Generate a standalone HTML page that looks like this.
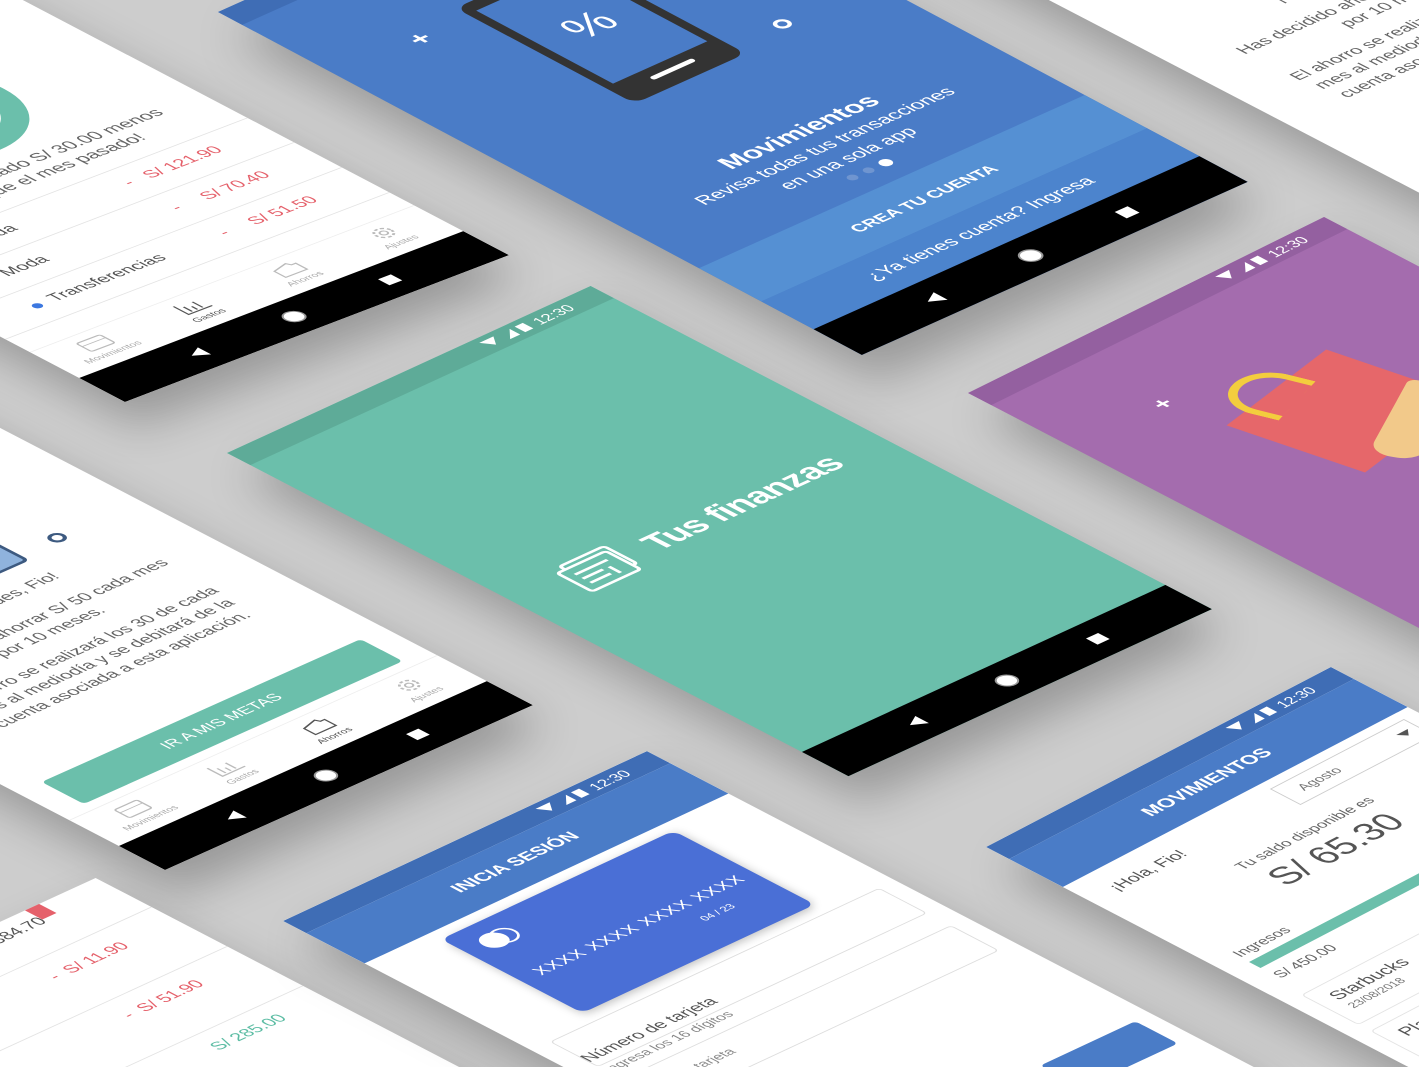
<!DOCTYPE html>
<html><head><meta charset="utf-8">
<style>
*{margin:0;padding:0;box-sizing:border-box}
html,body{width:1419px;height:1067px;overflow:hidden;background:#cdcdcd;font-family:"Liberation Sans",sans-serif}
#wrap{position:relative;width:1419px;height:1067px;overflow:hidden;background:#cdcdcd}
.ph{position:absolute;left:0;top:0;width:360px;height:640px;transform-origin:0 0;overflow:hidden;background:#fff;box-shadow:-16px 32px 40px rgba(0,0,0,.26)}
.ab{position:absolute}
.sb{position:absolute;left:0;top:0;width:360px;height:24px}
.sb svg{position:absolute;right:8px;top:4px}
.nav{position:absolute;left:0;top:592px;width:360px;height:48px;background:#000}
.nav svg{position:absolute;left:0;top:0}
.c{text-align:center;width:360px;left:0}
.tab{position:absolute;top:548px;width:90px;text-align:center;font-size:9px;color:#aaa}
.row{position:absolute;left:0;width:360px;height:50px;border-bottom:1px solid #e3e3e3}
.red{color:#e5616b}
</style></head><body><div id="wrap">

<!-- top-right savings phone (partial) -->
<div class="ph" style="transform:matrix(1.022,-0.458,0.961,0.5,895,-80)">
  <div class="ab c" style="top:262px;font-size:16px;color:#666">¡Felicidades, Fio!</div>
  <div class="ab c" style="top:298px;font-size:16px;color:#666;line-height:21px">Has decidido ahorrar S/ 50 cada mes<br>por 10 meses.</div>
  <div class="ab c" style="top:352px;font-size:16px;color:#666;line-height:21px">El ahorro se realizará los 30 de cada<br>mes al mediodía y se debitará de la<br>cuenta asociada a esta aplicación.</div>
  <div class="nav"></div>
</div>

<!-- top-left spending phone -->
<div class="ph" style="transform:matrix(1.067,-0.408,0.953,0.5,-485,82)">
  <div class="sb" style="background:#3f6db5"></div>
  <div class="ab" style="left:0;top:24px;width:360px;height:56px;background:#4a7cc7"></div>
  <svg class="ab" style="left:115px;top:150px" width="150" height="150"><circle cx="75" cy="75" r="58" fill="none" stroke="#6bbfab" stroke-width="20"/><circle cx="75" cy="75" r="58" fill="none" stroke="#e5616b" stroke-width="20" stroke-dasharray="90 400" transform="rotate(-150 75 75)"/><circle cx="75" cy="75" r="58" fill="none" stroke="#4a7cc7" stroke-width="20" stroke-dasharray="50 400" transform="rotate(-200 75 75)"/></svg>
  <div class="ab" style="left:30px;top:308px;width:360px;text-align:center;font-size:17px;color:#666;line-height:21px">Has gastado S/ 30.00 menos<br>que el mes pasado!</div>
  <div class="row" style="top:365px;border-top:1px solid #e3e3e3"></div>
  <div class="row" style="top:415px"></div>
  <div class="row" style="top:465px"></div>
  <div class="ab" style="left:48px;top:386px;width:8px;height:8px;border-radius:50%;background:#6bbfab"></div>
  <div class="ab" style="left:66px;top:380px;font-size:16px;color:#555">Comida</div>
  <div class="ab red" style="left:226px;top:380px;font-size:16px">-&nbsp;&nbsp;&nbsp;S/ 121.90</div>
  <div class="ab" style="left:48px;top:436px;width:8px;height:8px;border-radius:50%;background:#e8385a"></div>
  <div class="ab" style="left:66px;top:430px;font-size:16px;color:#555">Moda</div>
  <div class="ab red" style="left:226px;top:430px;font-size:16px">-&nbsp;&nbsp;&nbsp;&nbsp;&nbsp;S/ 70.40</div>
  <div class="ab" style="left:48px;top:486px;width:8px;height:8px;border-radius:50%;background:#3c78e0"></div>
  <div class="ab" style="left:66px;top:480px;font-size:16px;color:#555">Transferencias</div>
  <div class="ab red" style="left:226px;top:480px;font-size:16px">-&nbsp;&nbsp;&nbsp;&nbsp;&nbsp;S/ 51.50</div>
  <div class="ab" style="left:0;top:540px;width:360px;height:52px;border-top:1px solid #eee"></div>
  <div class="tab" style="left:0"><svg width="30" height="22"><rect x="4" y="3" width="22" height="16" rx="2" fill="none" stroke="#bbb" stroke-width="1.5"/><line x1="4" y1="9" x2="26" y2="9" stroke="#bbb"/></svg><br>Movimientos</div>
  <div class="tab" style="left:90px;color:#555"><svg width="30" height="22"><path d="M5 3V19H27M10 8V17M15 11V17M20 6V17" fill="none" stroke="#555" stroke-width="1.5"/></svg><br>Gastos</div>
  <div class="tab" style="left:180px"><svg width="30" height="22"><path d="M6 7L20 3L22 7H26V19H6Z" fill="none" stroke="#bbb" stroke-width="1.5"/></svg><br>Ahorros</div>
  <div class="tab" style="left:270px"><svg width="30" height="22"><circle cx="15" cy="11" r="7" fill="none" stroke="#bbb" stroke-width="2" stroke-dasharray="3 2"/><circle cx="15" cy="11" r="3" fill="none" stroke="#bbb" stroke-width="1.5"/></svg><br>Ajustes</div>
  <div class="nav"><svg width="360" height="48"><path d="M84 24L96 17V31Z" fill="#fff"/><circle cx="180" cy="24" r="8" fill="#fff" stroke="#999" stroke-width="1.5"/><rect x="264" y="18" width="12" height="12" fill="#fff"/></svg></div>
</div>

<!-- blue onboarding phone -->
<div class="ph" style="background:#4a7cc7;transform:matrix(1.072,-0.481,1.006,0.536,218,12)">
  <div class="sb" style="background:#3f6db5"></div>
  <div class="ab" style="left:70px;top:106px;color:#fff;font-size:24px;font-weight:bold">+</div>
  <div class="ab" style="left:268px;top:262px;width:13px;height:13px;border:3px solid #fff;border-radius:50%"></div>
  <div class="ab" style="left:124px;top:104px;width:104px;height:178px;background:#333;border-radius:10px"></div>
  <div class="ab" style="left:132px;top:116px;width:88px;height:136px;background:#4a7cc7"></div>
  <div class="ab" style="left:156px;top:262px;width:40px;height:5px;background:#fff;border-radius:3px"></div>
  <div class="ab" style="left:132px;top:160px;width:88px;text-align:center;color:#fff;font-size:40px">%</div>
  <div class="ab c" style="top:372px;color:#fff;font-size:23px;font-weight:bold">Movimientos</div>
  <div class="ab c" style="top:400px;color:#fff;font-size:17px;line-height:23px">Revisa todas tus transacciones<br>en una sola app</div>
  <div class="ab" style="left:160px;top:452px;width:8px;height:8px;border-radius:50%;background:#6f95d0"></div>
  <div class="ab" style="left:175px;top:452px;width:8px;height:8px;border-radius:50%;background:#6f95d0"></div>
  <div class="ab" style="left:190px;top:451px;width:10px;height:10px;border-radius:50%;background:#fff"></div>
  <div class="ab" style="left:0;top:478px;width:360px;height:62px;background:#5590d3"></div>
  <div class="ab c" style="top:502px;color:#fff;font-size:15px;font-weight:bold">CREA TU CUENTA</div>
  <div class="ab" style="left:0;top:540px;width:360px;height:52px;background:#4c84cd"></div>
  <div class="ab c" style="top:556px;color:#fff;font-size:17px">¿Ya tienes cuenta? Ingresa</div>
  <div class="nav"><svg width="360" height="48"><path d="M84 24L96 17V31Z" fill="#fff"/><circle cx="180" cy="24" r="8" fill="#fff" stroke="#999" stroke-width="1.5"/><rect x="264" y="18" width="12" height="12" fill="#fff"/></svg></div>
</div>

<!-- purple phone -->
<div class="ph" style="background:#a46cae;transform:matrix(0.989,-0.489,0.969,0.505,968,393)">
  <div class="sb" style="background:#9460a0"><svg width="110" height="16"><path d="M2 2H16L9 12Z M22 13L32 2V13Z" fill="#fff"/><rect x="37" y="2" width="8" height="11" fill="#fff"/><text x="52" y="13" fill="#fff" font-size="14" font-family="Liberation Sans">12:30</text></svg></div>
  <div class="ab" style="left:84px;top:96px;color:#fff;font-size:22px;font-weight:bold">+</div>
  <div class="ab" style="left:113px;top:148px;width:130px;height:120px;background:#e6676a;transform:rotate(-12deg)"></div>
  <div class="ab" style="left:123px;top:123px;width:62px;height:52px;border:7px solid #f3cd3e;border-bottom:none;border-radius:32px 32px 0 0;transform:rotate(-20deg)"></div>
  <div class="ab" style="left:150px;top:232px;width:110px;height:40px;background:#f2c98a;border-radius:18px 6px 6px 18px;transform:rotate(-30deg)"></div>
  <div class="ab" style="left:200px;top:215px;width:90px;height:22px;background:#f2c98a;border-radius:10px;transform:rotate(-20deg)"></div>
</div>

<!-- green splash -->
<div class="ph" style="background:#6bbfab;transform:matrix(1.01,-0.464,0.971,0.505,227,453)">
  <div class="sb" style="background:#5eab98"><svg width="110" height="16"><path d="M2 2H16L9 12Z M22 13L32 2V13Z" fill="#fff"/><rect x="37" y="2" width="8" height="11" fill="#fff"/><text x="52" y="13" fill="#fff" font-size="14" font-family="Liberation Sans">12:30</text></svg></div>
  <svg class="ab" style="left:46px;top:276px" width="66" height="52"><g fill="none" stroke="#fff" stroke-width="3" stroke-linejoin="round"><rect x="14" y="4" width="44" height="34" rx="3"/><rect x="6" y="10" width="48" height="36" rx="3" fill="#6bbfab"/><line x1="14" y1="20" x2="46" y2="20"/><line x1="14" y1="28" x2="34" y2="28"/><line x1="14" y1="36" x2="34" y2="36"/><line x1="40" y1="28" x2="40" y2="40"/></g></svg>
  <div class="ab" style="left:128px;top:283px;color:#fff;font-size:32px;font-weight:bold;letter-spacing:-0.5px">Tus finanzas</div>
  <div class="nav"><svg width="360" height="48"><path d="M84 24L96 17V31Z" fill="#fff"/><circle cx="180" cy="24" r="8" fill="#fff" stroke="#999" stroke-width="1.5"/><rect x="264" y="18" width="12" height="12" fill="#fff"/></svg></div>
</div>

<!-- left savings phone -->
<div class="ph" style="transform:matrix(1.022,-0.458,0.961,0.5,-450,550)">
  <div class="sb" style="background:#3f6db5"></div>
  <div class="ab" style="left:0;top:24px;width:360px;height:56px;background:#4a7cc7"></div>
  <div class="ab" style="left:200px;top:190px;width:42px;height:52px;background:#8fb3dd;border:3px solid #3d5a80;border-radius:5px"></div>
  <div class="ab" style="left:272px;top:224px;width:14px;height:14px;border:3px solid #3d5a80;border-radius:50%"></div>
  <div class="ab c" style="top:262px;font-size:16px;color:#666">¡Felicidades, Fio!</div>
  <div class="ab c" style="top:298px;font-size:16px;color:#666;line-height:21px">Has decidido ahorrar S/ 50 cada mes<br>por 10 meses.</div>
  <div class="ab c" style="top:352px;font-size:16px;color:#666;line-height:21px">El ahorro se realizará los 30 de cada<br>mes al mediodía y se debitará de la<br>cuenta asociada a esta aplicación.</div>
  <div class="ab" style="left:24px;top:486px;width:312px;height:44px;border-radius:4px;background:#6bbfab;color:#fff;font-size:15px;text-align:center;line-height:44px">IR A MIS METAS</div>
  <div class="ab" style="left:0;top:540px;width:360px;height:52px;border-top:1px solid #eee"></div>
  <div class="tab" style="left:0"><svg width="30" height="22"><rect x="4" y="3" width="22" height="16" rx="2" fill="none" stroke="#bbb" stroke-width="1.5"/><line x1="4" y1="9" x2="26" y2="9" stroke="#bbb"/></svg><br>Movimientos</div>
  <div class="tab" style="left:90px"><svg width="30" height="22"><path d="M5 3V19H27M10 8V17M15 11V17M20 6V17" fill="none" stroke="#bbb" stroke-width="1.5"/></svg><br>Gastos</div>
  <div class="tab" style="left:180px;color:#555"><svg width="30" height="22"><path d="M6 7L20 3L22 7H26V19H6Z" fill="none" stroke="#555" stroke-width="1.5"/></svg><br>Ahorros</div>
  <div class="tab" style="left:270px"><svg width="30" height="22"><circle cx="15" cy="11" r="7" fill="none" stroke="#bbb" stroke-width="2" stroke-dasharray="3 2"/><circle cx="15" cy="11" r="3" fill="none" stroke="#bbb" stroke-width="1.5"/></svg><br>Ajustes</div>
  <div class="nav"><svg width="360" height="48"><path d="M84 24L96 17V31Z" fill="#fff"/><circle cx="180" cy="24" r="8" fill="#fff" stroke="#999" stroke-width="1.5"/><rect x="264" y="18" width="12" height="12" fill="#fff"/></svg></div>
</div>

<!-- bottom-left list phone -->
<div class="ph" style="transform:matrix(1.01,-0.464,0.971,0.505,-268,1045)">
  <div class="ab" style="left:290px;top:-4px;width:14px;height:22px;background:#e5616b"></div>
  <div class="ab" style="left:222px;top:10px;font-size:16px;color:#555">S/ 384.70</div>
  <div class="row" style="top:8px"></div>
  <div class="ab red" style="left:236px;top:76px;font-size:16px">-&nbsp;&nbsp;S/ 11.90</div>
  <div class="row" style="top:86px"></div>
  <div class="ab red" style="left:236px;top:152px;font-size:16px">-&nbsp;&nbsp;S/ 51.90</div>
  <div class="row" style="top:164px"></div>
  <div class="ab" style="left:250px;top:228px;font-size:16px;color:#5dbda4">S/ 285.00</div>
</div>

<!-- login phone -->
<div class="ph" style="transform:matrix(1.011,-0.472,0.97,0.505,283,921)">
  <div class="sb" style="background:#3f6db5"><svg width="110" height="16"><path d="M2 2H16L9 12Z M22 13L32 2V13Z" fill="#fff"/><rect x="37" y="2" width="8" height="11" fill="#fff"/><text x="52" y="13" fill="#fff" font-size="14" font-family="Liberation Sans">12:30</text></svg></div>
  <div class="ab" style="left:0;top:24px;width:360px;height:60px;background:#4a7cc7"></div>
  <div class="ab c" style="top:42px;color:#fff;font-size:17px;font-weight:bold">INICIA SESIÓN</div>
  <div class="ab" style="left:64px;top:96px;width:230px;height:146px;background:#4a6fd6;border-radius:8px;box-shadow:0 3px 8px rgba(0,0,0,.25)"></div>
  <div class="ab" style="left:80px;top:112px;width:22px;height:22px;border-radius:50%;background:#fff"></div>
  <div class="ab" style="left:90px;top:112px;width:22px;height:22px;border-radius:50%;border:2px solid #fff"></div>
  <div class="ab" style="left:80px;top:170px;color:#fff;font-size:16px;letter-spacing:1px">XXXX XXXX XXXX XXXX</div>
  <div class="ab" style="left:220px;top:198px;color:#fff;font-size:10px">04 / 23</div>
  <div class="ab" style="left:18px;top:256px;width:326px;height:50px;border:1px solid #ddd;border-radius:4px"></div>
  <div class="ab" style="left:18px;top:284px;font-size:16px;color:#555">Número de tarjeta</div>
  <div class="ab" style="left:18px;top:306px;font-size:13px;color:#888">Ingresa los 16 dígitos</div>
  <div class="ab" style="left:18px;top:330px;width:326px;height:50px;border:1px solid #ddd;border-radius:4px"></div>
  <div class="ab" style="left:26px;top:346px;font-size:13px;color:#888">Validar tarjeta</div>
  <div class="ab" style="left:250px;top:520px;width:94px;height:44px;border-radius:4px;background:#4a7cc7"></div>
</div>

<!-- bottom-right movimientos phone -->
<div class="ph" style="transform:matrix(0.958,-0.5,0.96,0.5,986,847)">
  <div class="sb" style="background:#3f6db5"><svg width="110" height="16"><path d="M2 2H16L9 12Z M22 13L32 2V13Z" fill="#fff"/><rect x="37" y="2" width="8" height="11" fill="#fff"/><text x="52" y="13" fill="#fff" font-size="14" font-family="Liberation Sans">12:30</text></svg></div>
  <div class="ab" style="left:0;top:24px;width:360px;height:56px;background:#4a7cc7"></div>
  <div class="ab c" style="top:40px;color:#fff;font-size:18px;font-weight:bold">MOVIMIENTOS</div>
  <div class="ab" style="left:24px;top:100px;font-size:16px;color:#555">¡Hola, Fio!</div>
  <div class="ab" style="left:206px;top:90px;width:140px;height:32px;border:1px solid #ccc"></div>
  <div class="ab" style="left:222px;top:98px;font-size:13px;color:#777">Agosto</div>
  <div class="ab" style="left:326px;top:102px;width:0;height:0;border-left:6px solid transparent;border-right:6px solid transparent;border-top:7px solid #555"></div>
  <div class="ab c" style="top:144px;font-size:14px;color:#666">Tu saldo disponible es</div>
  <div class="ab c" style="top:166px;font-size:34px;color:#555">S/ 65.30</div>
  <div class="ab" style="left:22px;top:230px;font-size:14px;color:#666">Ingresos</div>
  <div class="ab" style="left:22px;top:252px;width:320px;height:12px;background:#6bbfab"></div>
  <div class="ab" style="left:22px;top:272px;font-size:14px;color:#666">S/ 450.00</div>
  <div class="ab" style="left:16px;top:312px;width:328px;height:60px;border:1px solid #e3e3e3;border-radius:4px"></div>
  <div class="ab" style="left:30px;top:322px;font-size:17px;color:#555">Starbucks</div>
  <div class="ab" style="left:30px;top:344px;font-size:11px;color:#777">23/08/2018</div>
  <div class="ab" style="left:16px;top:384px;width:328px;height:60px;border:1px solid #e3e3e3;border-radius:4px"></div>
  <div class="ab" style="left:30px;top:394px;font-size:17px;color:#555">Plaza Vea</div>
</div>

</div></body></html>
